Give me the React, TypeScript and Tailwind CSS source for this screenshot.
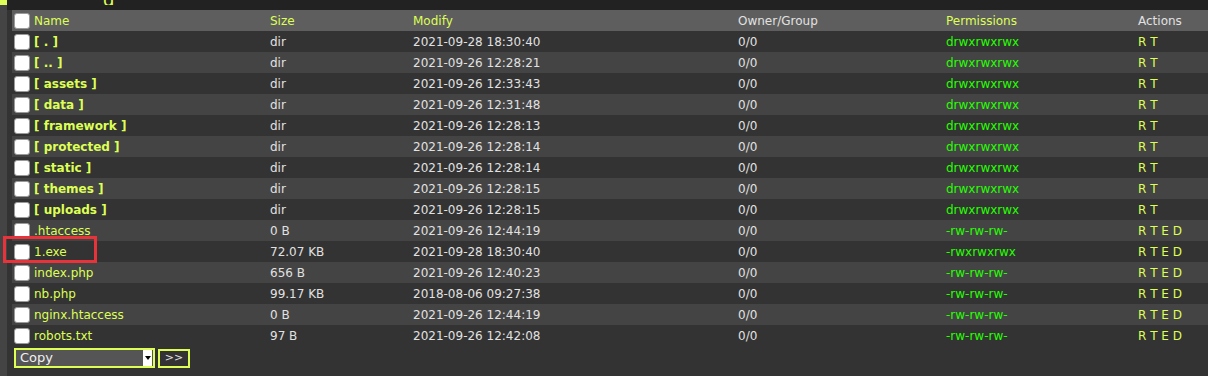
import React from 'react';

type Entry = {
    name: string;
    size: string;
    modify: string;
    perms: string;
    dir?: boolean;
};

const entries: Entry[] = [
    { name: '[ . ]', size: 'dir', modify: '2021-09-28 18:30:40', perms: 'drwxrwxrwx', dir: true },
    { name: '[ .. ]', size: 'dir', modify: '2021-09-26 12:28:21', perms: 'drwxrwxrwx', dir: true },
    { name: '[ assets ]', size: 'dir', modify: '2021-09-26 12:33:43', perms: 'drwxrwxrwx', dir: true },
    { name: '[ data ]', size: 'dir', modify: '2021-09-26 12:31:48', perms: 'drwxrwxrwx', dir: true },
    { name: '[ framework ]', size: 'dir', modify: '2021-09-26 12:28:13', perms: 'drwxrwxrwx', dir: true },
    { name: '[ protected ]', size: 'dir', modify: '2021-09-26 12:28:14', perms: 'drwxrwxrwx', dir: true },
    { name: '[ static ]', size: 'dir', modify: '2021-09-26 12:28:14', perms: 'drwxrwxrwx', dir: true },
    { name: '[ themes ]', size: 'dir', modify: '2021-09-26 12:28:15', perms: 'drwxrwxrwx', dir: true },
    { name: '[ uploads ]', size: 'dir', modify: '2021-09-26 12:28:15', perms: 'drwxrwxrwx', dir: true },
    { name: '.htaccess', size: '0 B', modify: '2021-09-26 12:44:19', perms: '-rw-rw-rw-' },
    { name: '1.exe', size: '72.07 KB', modify: '2021-09-28 18:30:40', perms: '-rwxrwxrwx' },
    { name: 'index.php', size: '656 B', modify: '2021-09-26 12:40:23', perms: '-rw-rw-rw-' },
    { name: 'nb.php', size: '99.17 KB', modify: '2018-08-06 09:27:38', perms: '-rw-rw-rw-' },
    { name: 'nginx.htaccess', size: '0 B', modify: '2021-09-26 12:44:19', perms: '-rw-rw-rw-' },
    { name: 'robots.txt', size: '97 B', modify: '2021-09-26 12:42:08', perms: '-rw-rw-rw-' },
];

const cols = 'grid grid-cols-[256px_143px_325px_208px_192px_1fr]';

function Check() {
    return <span className="block w-4 h-4 rounded-[3px] bg-white border border-[#9a9a9a] shrink-0" />;
}

export default function App() {
    return (
        <div className="w-[1208px] h-[376px] overflow-hidden bg-[#444] text-[12px] text-[#e1e1e1]" style={{ fontFamily: '"DejaVu Sans", Verdana, sans-serif' }}>
            {/* cut-off h1 */}
            <div className="h-[5px] flex">
                <div className="w-[7px] bg-[#df5]" />
                <div className="flex-1 bg-[#222] relative">
                    <span className="absolute left-[96px] -top-[14px] text-[#df5] text-[18px]">g</span>
                </div>
            </div>

            <div className="ml-[7px] bg-[#333] pl-[5px] pt-[5px] h-[371px] relative">
                <div className="absolute inset-x-0 top-0 h-[5px] bg-[#222]" />
                <div className="relative">
                    {/* header */}
                    <div className={`${cols} h-[21px] items-center bg-[#5e5e5e]`}>
                        <div className="flex items-center gap-[4px] pl-[2px]">
                            <Check />
                            <span className="text-[#df5]">Name</span>
                        </div>
                        <div className="pl-[2px] text-[#df5]">Size</div>
                        <div className="pl-[2px] text-[#df5]">Modify</div>
                        <div className="pl-[2px]">Owner/Group</div>
                        <div className="pl-[2px] text-[#df5]">Permissions</div>
                        <div className="pl-[2px]">Actions</div>
                    </div>

                    {entries.map((e, i) => (
                        <div key={e.name} className={`${cols} h-[21px] items-center ${i % 2 === 0 ? 'bg-[#333]' : 'bg-[#444]'}`}>
                            <div className="flex items-center gap-[4px] pl-[2px]">
                                <Check />
                                <span className={`text-[#df5] ${e.dir ? 'font-bold' : ''}`}>{e.name}</span>
                            </div>
                            <div className="pl-[2px]">{e.size}</div>
                            <div className="pl-[2px]">{e.modify}</div>
                            <div className="pl-[2px]">0/0</div>
                            <div className="pl-[2px] text-[#25ff00]">{e.perms}</div>
                            <div className="pl-[2px] text-[#df5]">{e.dir ? 'R T' : 'R T E D'}</div>
                        </div>
                    ))}

                    {/* action bar */}
                    <div className="flex items-center gap-[3px] mt-[2px] pl-[2px]">
                        <div className="w-[141px] h-[20px] border-2 border-[#df5] bg-[#555] flex items-center justify-between">
                            <span className="pl-[4px] text-[#f0f0f0] text-[13px]">Copy</span>
                            <span className="w-[9px] h-[16px] bg-white flex items-center justify-center mr-[1px]">
                                <span className="block w-0 h-0 border-l-[3px] border-r-[3px] border-t-[4px] border-l-transparent border-r-transparent border-t-black" />
                            </span>
                        </div>
                        <div className="w-[32px] h-[19px] border-2 border-[#df5] bg-[#333] flex items-center justify-center text-[11px] text-[#e1e1e1]">
                            &gt;&gt;
                        </div>
                    </div>

                    {/* annotation box */}
                    <div className="absolute left-[-9px] top-[226px] w-[94px] h-[27px] border-[3px] border-[#e8333a]" />
                </div>
            </div>
        </div>
    );
}
